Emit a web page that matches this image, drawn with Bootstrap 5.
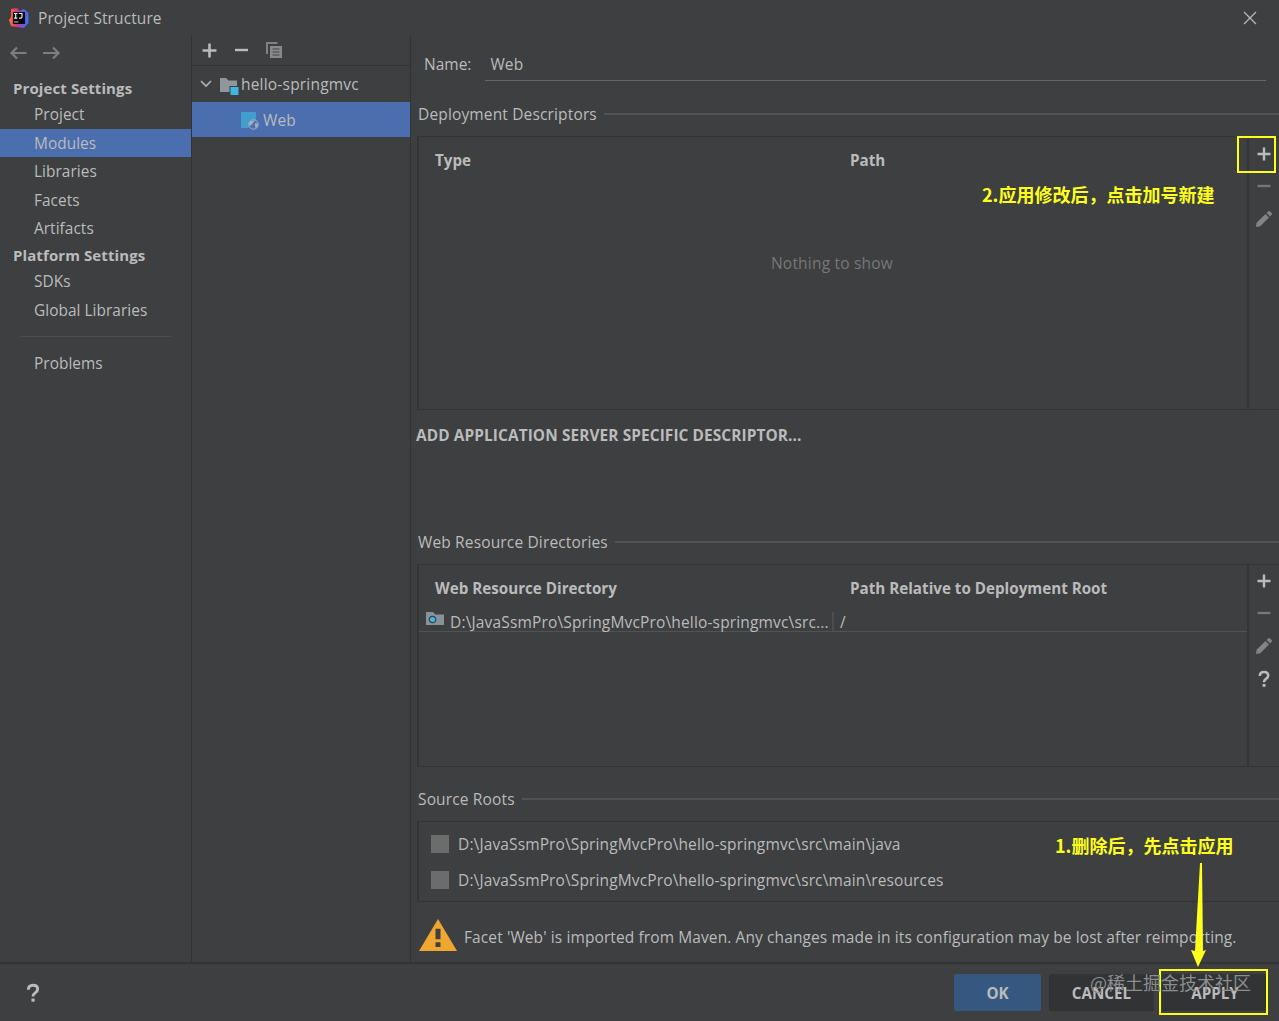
<!DOCTYPE html>
<html lang="en">
<head>
<meta charset="utf-8">
<meta name="viewport" content="width=device-width, initial-scale=1">
<title>Project Structure</title>
<link href="https://cdn.jsdelivr.net/npm/bootstrap@5.3.0/dist/css/bootstrap.min.css" rel="stylesheet">
<style>
  body { background:#3d3f41; color:#bbb; font-family:"Open Sans","Noto Sans CJK SC",sans-serif; font-size:15.5px; letter-spacing:.1px; line-height:20px; height:1021px; overflow:hidden; }
  svg { display:block; flex:none; }
  .titlebar { height:36px; padding:0 22px 1px 8px; }
  .title-text { margin-left:9px; }
  .middle { height:926px; }
  .side { width:192px; border-right:1px solid #313335; }
  .history { height:40px; padding:8px 9px 0; gap:13px; }
  .side-head { height:24px; padding-left:13px; font-weight:700; line-height:25px; font-size:15px; }
  .side-item { height:28.6px; padding-left:34px; line-height:30.5px; font-size:15.4px; letter-spacing:.05px; }
  .picked { background:#4b6eaf; }
  .side-rule { height:1px; background:#4b4d4f; margin:12px 20px 12px; }
  .tree { width:219px; border-right:1px solid #313335; }
  .tree-tools { height:30px; padding:0 10px 1px; border-bottom:1px solid #313335; gap:17px; }
  .tree-row { height:35px; }
  .tree-root { height:36px; padding-bottom:1px; }
  .module-label { margin-left:1px; letter-spacing:.2px; }
  .editor { padding-left:7px; min-width:0; }
  .name-row { height:45px; padding-left:6px; }
  .name-label { padding-top:16px; line-height:24px; letter-spacing:0; }
  .name-field { margin:8px 13px 0 14px; padding:10px 5px 0; height:37px; border-bottom:1px solid #646668; }
  .section-title { height:22px; gap:7px; line-height:22px; letter-spacing:.15px; }
  .section-title::after { content:""; flex:1; height:2px; background:#505254; }
  .deploy-title { margin-top:22px; }
  .panel { border:1px solid #323436; border-right:0; border-left-width:2px; margin-left:-1px; }
  .panel-tools { width:32px; border-left:2px solid #333537; padding-top:10px; gap:18px; }
  .cells { font-weight:700; font-size:15.200px; letter-spacing:0; padding:12px 0 0 16px; line-height:22px; }
  .cell-a { width:415px; }
  .panel-deploy { height:274px; margin-top:11px; }
  .empty { padding:82px 2px 0 0; color:#777; letter-spacing:.2px; }
  .dim { color:#777; }
  .add-desc { margin:15px 0 84px -2px; line-height:22px; height:22px; font-weight:700; font-size:15.400px; white-space:nowrap; }
  .panel-web { height:203px; margin-top:11px; }
  .panel-web .panel-tools { padding-top:9px; }
  .data-row { height:20px; border-bottom:1px solid #505254; padding-left:7px; margin-top:13px; white-space:nowrap; }
  .dir-text { width:384px; margin-left:6px; letter-spacing:.16px; border-right:2px solid #4b4d4f; }
  .root-text { margin-left:6px; }
  .roots-title { margin-top:21px; }
  .panel-roots { height:81px; margin-top:11px; padding:12px 0 0 12px; gap:16px; }
  .box { width:18px; height:18px; background:#6b6d6c; }
  .root-path { margin-left:9px; letter-spacing:.13px; }
  .warn { height:33px; margin:16px 0 0 1px; white-space:nowrap; }
  .warn-text { margin-left:7px; padding-top:4px; }
  .footbar { height:59px; border-top:2px solid #323436; padding:10px 11px 10px 25px; }
  .dlg { height:37px; font-weight:700; font-size:15.200px; color:#bbb; border:0; border-radius:2px; padding:2px 0 0; letter-spacing:0; background:#313335; }
  .dlg-ok { background:#365880; width:87px; }
  .dlg-cancel { width:105px; }
  .dlg-apply { width:106px; }
  .note { position:absolute; color:#ffff1c; font-family:"Noto Sans CJK SC",sans-serif; font-weight:700; font-size:18px; letter-spacing:0; line-height:24px; white-space:nowrap; }
  .frame { position:absolute; border:2px solid #ffff1c; }
  .stamp { position:absolute; left:1090px; top:970px; color:#8b8d8f; font-family:"Noto Sans CJK SC",sans-serif; font-size:18px; letter-spacing:0; line-height:25px; white-space:nowrap; }
</style>
<script src="https://cdn.jsdelivr.net/npm/bootstrap@5.3.0/dist/js/bootstrap.bundle.min.js"></script>
</head>
<body class="position-relative">
<svg width="0" height="0" class="position-absolute">
  <symbol id="plus" viewBox="0 0 14 14"><path d="M7 .5v13M.5 7h13" stroke="#bbb" stroke-width="2.4"/></symbol>
  <symbol id="minus" viewBox="0 0 14 14"><path d="M.5 7h13" stroke="currentColor" stroke-width="2.4"/></symbol>
  <symbol id="pencil" viewBox="0 0 18 18"><path d="M1 17l.6-4.300L10.500 4l3.500 3.500-8.700 8.700zM11.600 2.900l1.600-1.500q1-.8 2 .1l1.400 1.400q.8 1 0 1.900L15 6.400z" fill="#828486"/></symbol>
  <symbol id="query" viewBox="0 0 12 18"><path d="M1.800 6Q1.800 2 6 2t4.200 3.500Q10.200 7.500 8 8.900 6 10.200 6 12.200" fill="none" stroke="#bbb" stroke-width="2.600"/><path d="M4.600 14h2.900v2.800H4.600z" fill="#bbb"/></symbol>
</svg>

<header class="titlebar d-flex align-items-center">
  <svg width="21" height="20" viewBox="0 0 21 20">
    <defs><linearGradient id="lg"><stop offset="0" stop-color="#f8783c"/><stop offset=".35" stop-color="#e8326a"/><stop offset=".65" stop-color="#7555d8"/><stop offset="1" stop-color="#3d6cf0"/></linearGradient></defs>
    <path d="M3 1l6-1 2 3 5-2 4.500 4v10l-4.500 5-8-1-5-1-2-6 2-3z" fill="url(#lg)"/>
    <path d="M5 4h12v12H5z" fill="#08080a"/>
    <path d="M6 5.500h3.400M7.700 5.500v4.700M6 10.200h3.400M10.800 5.500h3.200v3.300q0 1.600-2.900 1.400" stroke="#eee" stroke-width="1.200" fill="none"/><path d="M6 14h4.500" stroke="#bbb"/>
  </svg>
  <span class="title-text">Project Structure</span>
  <svg class="ms-auto" width="14" height="14" viewBox="0 0 14 14"><path d="M1 1l12 12M13 1L1 13" stroke="#bbb" stroke-width="1.200"/></svg>
</header>

<div class="middle d-flex">
  <nav class="side flex-shrink-0">
    <div class="history d-flex">
      <svg width="20" height="18" viewBox="0 0 20 18"><path d="M17.500 9H2.500M8 3.500L2.500 9 8 14.500" fill="none" stroke="#7c7e80" stroke-width="2.200"/></svg>
      <svg width="20" height="18" viewBox="0 0 20 18"><path d="M1 9h15M11 3.500L16.500 9 11 14.500" fill="none" stroke="#7c7e80" stroke-width="2.200"/></svg>
    </div>
    <div class="side-head">Project Settings</div>
    <div class="side-item">Project</div>
    <div class="side-item picked">Modules</div>
    <div class="side-item">Libraries</div>
    <div class="side-item">Facets</div>
    <div class="side-item">Artifacts</div>
    <div class="side-head">Platform Settings</div>
    <div class="side-item">SDKs</div>
    <div class="side-item">Global Libraries</div>
    <div class="side-rule"></div>
    <div class="side-item">Problems</div>
  </nav>

  <section class="tree flex-shrink-0">
    <div class="tree-tools d-flex align-items-center">
      <svg width="15" height="15"><use href="#plus"/></svg>
      <svg width="15" height="14"><use href="#minus"/></svg>
      <svg width="17" height="17" viewBox="0 0 17 17"><path d="M1 12V1h10.500" fill="none" stroke="#7f8183" stroke-width="2"/><path d="M4 4h12v12H4z" fill="#87898b"/><path d="M6.500 7h7M6.500 10h7M6.500 13h7" stroke="#45474a" stroke-width="1.200"/></svg>
    </div>
    <div class="tree-row tree-root d-flex align-items-center">
      <svg class="ms-2" width="12" height="8" viewBox="0 0 12 8"><path d="M1 1l5 5 5-5" fill="none" stroke="#afb1b3" stroke-width="1.700"/></svg>
      <svg class="ms-2" style="margin-top:4px" width="20" height="18" viewBox="0 0 20 18"><path d="M-1 1h7l2.500 2.500H17v5.500H9.500v6H-1z" fill="#8d979d"/><path d="M10.500 10h8v8h-8z" fill="#40b6e0"/></svg>
      <span class="module-label">hello-springmvc</span>
    </div>
    <div class="tree-row picked d-flex align-items-center">
      <svg class="ms-5" style="margin-top:3px" width="20" height="18" viewBox="0 0 20 18"><path d="M1 0h15v9q-7-1-7.500 7H1z" fill="#439ed0"/><circle cx="13.500" cy="12.500" r="4.700" fill="#4b6eaf" stroke="#a7b2c2"/><path d="M9.500 10l4-1.800 1.200 1.300-2 1.300-.2 2-1.500-.5-.5 2-1.600-2zM15 11l3 .8-.7 2.700-2 1.800z" fill="#a7b2c2"/></svg>
      <span style="margin-left:3px">Web</span>
    </div>
  </section>

  <main class="editor flex-grow-1">
    <div class="name-row d-flex"><span class="name-label">Name:</span><div class="name-field flex-grow-1">Web</div></div>
    <div class="section-title deploy-title d-flex align-items-center">Deployment Descriptors</div>
    <div class="panel panel-deploy d-flex">
      <div class="flex-grow-1">
        <div class="cells d-flex"><span class="cell-a">Type</span><span>Path</span></div>
        <div class="empty text-center">Nothing to show</div>
      </div>
      <div class="panel-tools d-flex flex-column align-items-center">
        <svg width="14" height="14"><use href="#plus"/></svg>
        <svg class="dim" width="14" height="14"><use href="#minus"/></svg>
        <svg width="18" height="18" style="margin-top:-1px"><use href="#pencil"/></svg>
      </div>
    </div>
    <div class="add-desc">ADD APPLICATION SERVER SPECIFIC DESCRIPTOR...</div>
    <div class="section-title d-flex align-items-center">Web Resource Directories</div>
    <div class="panel panel-web d-flex">
      <div class="flex-grow-1">
        <div class="cells d-flex"><span class="cell-a">Web Resource Directory</span><span>Path Relative to Deployment Root</span></div>
        <div class="data-row d-flex">
          <svg width="18" height="15" viewBox="0 0 18 15"><path d="M0 0h7l2.500 2.500H18V13H0z" fill="#87939a"/><circle cx="6.500" cy="7.500" r="3.200" fill="#40b6e0" stroke="#35434b" stroke-width="1.200"/></svg>
          <span class="dir-text">D:\JavaSsmPro\SpringMvcPro\hello-springmvc\src...</span><span class="root-text">/</span>
        </div>
      </div>
      <div class="panel-tools d-flex flex-column align-items-center">
        <svg width="14" height="14"><use href="#plus"/></svg>
        <svg class="dim" width="14" height="14"><use href="#minus"/></svg>
        <svg width="18" height="18" style="margin-top:-1px"><use href="#pencil"/></svg>
        <svg width="12" height="18" style="margin-top:-3px"><use href="#query"/></svg>
      </div>
    </div>
    <div class="section-title d-flex align-items-center roots-title">Source Roots</div>
    <div class="panel panel-roots d-flex flex-column">
      <div class="d-flex align-items-center"><i class="box"></i><span class="root-path">D:\JavaSsmPro\SpringMvcPro\hello-springmvc\src\main\java</span></div>
      <div class="d-flex align-items-center"><i class="box"></i><span class="root-path">D:\JavaSsmPro\SpringMvcPro\hello-springmvc\src\main\resources</span></div>
    </div>
    <div class="warn d-flex align-items-center">
      <svg width="38" height="32" viewBox="0 0 38 33" preserveAspectRatio="none"><path d="M19 0l19 33H0z" fill="#f0a732"/><path d="M16.500 10h5v11h-5zM16.500 24h5v5h-5z" fill="#3d3f41"/></svg>
      <span class="warn-text">Facet 'Web' is imported from Maven. Any changes made in its configuration may be lost after reimporting.</span>
    </div>
  </main>
</div>

<footer class="footbar d-flex align-items-center">
  <svg width="16" height="20"><use href="#query"/></svg>
  <div class="d-flex gap-2 ms-auto">
    <button class="btn dlg dlg-ok">OK</button>
    <button class="btn dlg dlg-cancel">CANCEL</button>
    <button class="btn dlg dlg-apply">APPLY</button>
  </div>
</footer>

<div class="note" style="left:982px;top:182px">2.应用修改后，点击加号新建</div>
<div class="note" style="left:1055px;top:833px">1.删除后，先点击应用</div>
<div class="frame" style="left:1237px;top:136px;width:39px;height:37px"></div>
<div class="frame" style="left:1159px;top:969px;width:109px;height:46px"></div>
<svg class="position-absolute" style="left:1190px;top:863px" width="18" height="104" viewBox="0 0 18 104"><path d="M10 0h2l1 88 3-1-8 17L1 87l4 1z" fill="#ffff1c"/></svg>
<div class="stamp">@稀土掘金技术社区</div>
</body>
</html>
